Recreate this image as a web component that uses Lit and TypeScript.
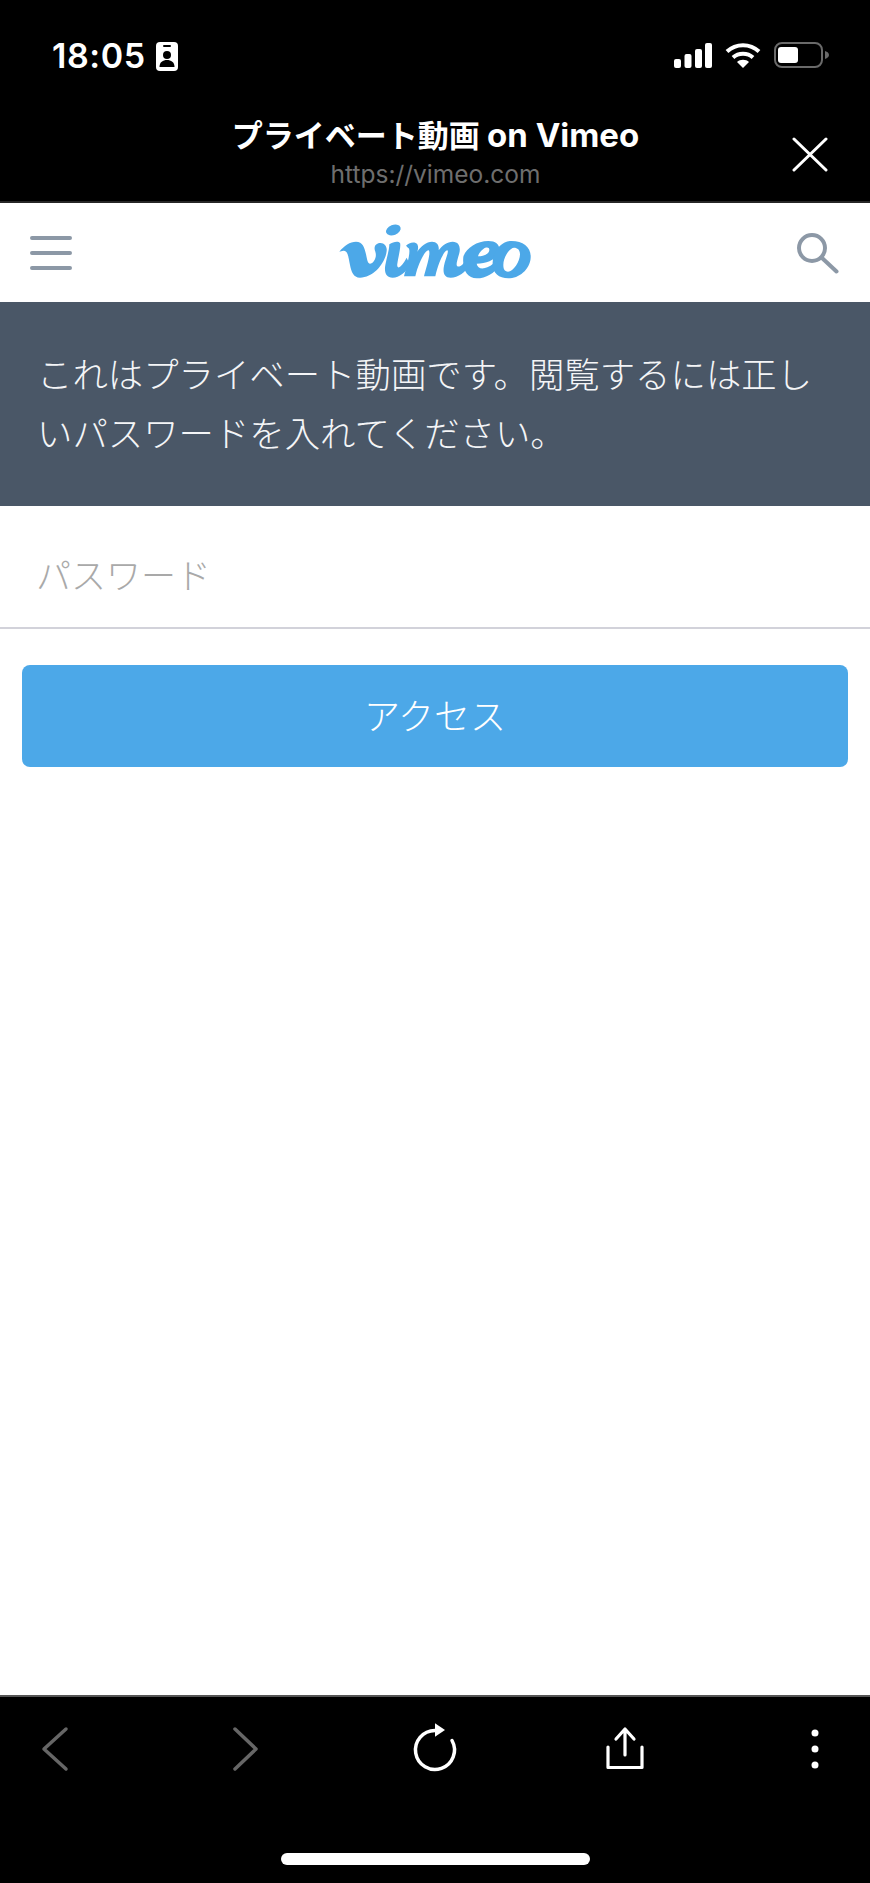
import { LitElement, html, css } from 'lit';
import { customElement } from 'lit/decorators.js';

@customElement('app-root')
export class AppRoot extends LitElement {
  static styles = css`
    :host {
      display: block;
      width: 870px;
      height: 1883px;
      overflow: hidden;
      background: #fff;
    }
    .page {
      display: flex;
      flex-direction: column;
      height: 1883px;
      font-family: Inter, "Noto Sans CJK JP", sans-serif;
    }
    .top {
      background: #000;
      color: #fff;
      height: 201px;
      border-bottom: 2px solid #262626;
      display: flex;
      flex-direction: column;
    }
    .status {
      height: 88px;
      padding: 24px 41px 0 52px;
      display: flex;
      align-items: center;
      justify-content: space-between;
      box-sizing: border-box;
    }
    .left,
    .right {
      display: flex;
      align-items: center;
    }
    .left {
      gap: 10px;
    }
    .right {
      gap: 13px;
      margin-top: -2px;
    }
    .time {
      font-size: 34px;
      font-weight: 600;
      letter-spacing: 0.6px;
      line-height: 40px;
    }
    .titlebar {
      flex: 1;
      display: grid;
      grid-template-columns: 1fr auto 1fr;
      align-items: center;
      padding: 0 42px 0 43px;
    }
    .titles {
      text-align: center;
      margin-top: 12px;
    }
    .title {
      font-size: 31px;
      font-weight: 700;
      line-height: 46px;
      white-space: nowrap;
    }
    .latin {
      font-size: 33px;
    }
    .url {
      font-size: 24.500px;
      line-height: 30px;
      color: #6e6e6e;
    }
    .close {
      justify-self: end;
      margin-top: 20px;
    }
    .nav {
      height: 99px;
      padding: 0 31px 0 30px;
      display: flex;
      align-items: center;
      justify-content: space-between;
      background: #fff;
    }
    .logo {
      margin-bottom: 6px;
    }
    .banner {
      background: #4a5767;
      color: #f4f5f7;
      font-family: "Noto Sans CJK JP", sans-serif;
      font-weight: 300;
      font-size: 35.400px;
      line-height: 59px;
      padding: 41px 50px 0 37px;
      height: 204px;
      box-sizing: border-box;
    }
    .field {
      height: 121px;
      border-bottom: 2px solid #d2d2da;
      display: flex;
      align-items: center;
    }
    .field input {
      width: 100%;
      border: 0;
      outline: 0;
      background: transparent;
      padding: 14px 0 0 36px;
      font-family: "Noto Sans CJK JP", sans-serif;
      font-weight: 300;
      font-size: 35px;
    }
    .field input::placeholder {
      color: #a9a9a9;
      opacity: 1;
    }
    .form {
      padding: 36px 22px 0;
    }
    .access {
      display: block;
      width: 100%;
      height: 102px;
      border: 0;
      border-radius: 8px;
      background: #4ca8e8;
      color: #fff;
      font-family: "Noto Sans CJK JP", sans-serif;
      font-weight: 300;
      font-size: 36px;
      padding: 0 0 4px;
    }
    .spacer {
      flex: 1;
    }
    .bottom {
      background: #000;
      height: 186px;
      border-top: 2px solid #555;
      display: flex;
      flex-direction: column;
      align-items: center;
    }
    .tools {
      width: 100%;
      box-sizing: border-box;
      padding: 29px 36px 0;
      display: flex;
      justify-content: space-between;
      height: 156px;
    }
    .reload {
      margin-top: -5px;
      overflow: visible;
    }
    .home {
      width: 309px;
      height: 12px;
      border-radius: 6px;
      background: #fff;
    }
    svg {
      display: block;
      flex: none;
    }
  `;

  render() {
    return html`
      <div class="page">
        <div class="top">
          <div class="status">
            <div class="left">
              <span class="time">18:05</span>
              <svg width="22" height="29" viewBox="0 0 22 29">
                <rect width="22" height="29" rx="4" fill="#fff" />
                <rect x="7" y="3" width="8" height="2" rx="1" fill="#000" />
                <circle cx="11" cy="13" r="4" fill="#000" />
                <path d="M3.500 25c0-5 3.500-7 7.500-7s7.500 2 7.500 7z" fill="#000" />
              </svg>
            </div>
            <div class="right">
              <svg width="38" height="25" viewBox="0 0 38 25" fill="#fff">
                <rect x="0" y="16" width="7" height="9" rx="2" />
                <rect x="10.500" y="11" width="7" height="14" rx="2" />
                <rect x="21" y="6" width="7" height="19" rx="2" />
                <rect x="31" y="0" width="7" height="25" rx="2" />
              </svg>
              <svg width="36" height="26" viewBox="0 0 36 26" fill="none" stroke="#fff" stroke-width="4">
                <path d="M2 9.500C11 1 25 1 34 9.500" />
                <path d="M8 15.500C13.500 10.500 22.500 10.500 28 15.500" />
                <path d="M18 26l-6-6c3-3 9-3 12 0z" fill="#fff" stroke="none" />
              </svg>
              <svg width="55" height="26" viewBox="0 0 55 26">
                <rect x="1" y="1" width="47" height="24" rx="7" fill="none" stroke="#6a6a6a" stroke-width="2" />
                <rect x="4" y="5" width="20" height="16" rx="3" fill="#fff" />
                <path d="M51 9c2.500 .8 4 2.200 4 4s-1.500 3.200-4 4z" fill="#6a6a6a" />
              </svg>
            </div>
          </div>
          <div class="titlebar">
            <span></span>
            <div class="titles">
              <div class="title">プライベート動画 <span class="latin">on Vimeo</span></div>
              <div class="url">https://vimeo.com</div>
            </div>
            <svg class="close" width="36" height="35" viewBox="0 0 36 35" stroke="#fff" stroke-width="3" stroke-linecap="round">
              <path d="M2 2l32 31M34 2L2 33" />
            </svg>
          </div>
        </div>

        <div class="nav">
          <svg width="42" height="34" viewBox="0 0 42 34" stroke="#8c98a6" stroke-width="4" stroke-linecap="round">
            <path d="M2 2h38M2 17h38M2 32h38" />
          </svg>
          <svg class="logo" width="210" height="70" viewBox="0 0 630 210" fill="#4ca8e8" fill-rule="evenodd">
            <ellipse cx="190" cy="45" rx="23" ry="15" transform="rotate(-22 190 45)" />
            <path d="M28 110C42 92 60 80 78 80C98 80 104 98 108 118C112 138 114 146 120 146C130 146 142 128 136 110C132 100 132 90 145 85C160 80 172 92 170 108C166 145 130 188 90 188C70 188 64 170 60 150C56 130 54 110 44 108C38 106 32 110 28 110Z" />
            <path d="M178 88C190 80 205 78 210 84C214 92 204 130 202 146C200 158 206 160 212 154C220 146 226 136 230 128L240 150C228 172 208 188 188 188C168 188 162 172 166 150C170 128 178 104 178 88Z" />
            <path d="M228 92C236 82 256 78 262 88C266 96 264 104 262 110C272 94 290 80 306 80C322 80 328 92 326 106C336 92 352 80 368 80C388 80 392 98 388 114C384 130 376 150 382 154C390 158 402 146 412 128L420 146C408 172 384 188 362 188C342 188 338 172 342 152C346 132 358 108 352 106C344 104 326 140 316 184L282 184C288 160 304 112 296 106C288 102 266 140 256 184L222 184C228 160 244 108 236 100C232 96 228 92 228 92Z" />
            <path d="M400 125C408 100 440 78 475 78C498 78 510 90 508 106C504 132 472 146 440 146C442 156 450 162 462 160C476 158 488 148 498 138L508 152C494 174 468 190 440 190C412 190 396 165 400 125ZM444 124C462 124 478 116 478 104C478 96 468 96 460 102C452 108 446 116 444 124Z" />
            <path d="M545 78C580 78 604 98 602 128C600 164 566 190 535 190C505 190 486 172 488 142C490 106 515 78 545 78ZM552 98C540 98 520 125 520 150C520 165 526 170 534 170C550 170 570 140 570 118C570 104 562 98 552 98Z" />
          </svg>
          <svg width="42" height="44" viewBox="0 0 42 44" fill="none" stroke="#8c98a6" stroke-width="4" stroke-linecap="round">
            <circle cx="15" cy="17" r="13" />
            <path d="M24.500 26.500L39.500 40.500" />
          </svg>
        </div>

        <div class="banner">これはプライベート動画です。閲覧するには正しいパスワードを入れてください。</div>

        <div class="field"><input type="password" placeholder="パスワード" /></div>

        <div class="form"><button class="access">アクセス</button></div>

        <div class="spacer"></div>

        <div class="bottom">
          <div class="tools">
            <svg width="38" height="46" viewBox="0 0 38 46" fill="none" stroke="#666" stroke-width="3.500" stroke-linecap="round" stroke-linejoin="round">
              <path d="M30 3L8 23l22 20" />
            </svg>
            <svg width="38" height="46" viewBox="0 0 38 46" fill="none" stroke="#666" stroke-width="3.500" stroke-linecap="round" stroke-linejoin="round">
              <path d="M9 3l21 20L9 43" />
            </svg>
            <svg class="reload" width="38" height="50" viewBox="4 0 38 50" fill="none" stroke="#fff" stroke-width="3.500" stroke-linecap="round">
              <path d="M40 19.500A19.500 19.500 0 1 1 23 9.500" />
              <path d="M23 2.300l10 6.700-10 6.700z" fill="#fff" stroke="none" />
            </svg>
            <svg width="38" height="46" viewBox="0 0 38 46" fill="none" stroke="#fff" stroke-width="3.200" stroke-linecap="round" stroke-linejoin="round">
              <path d="M2 21v20.500h34V21" />
              <path d="M19 29V4M10 13l9-10 9 10" />
            </svg>
            <svg width="38" height="46" viewBox="0 0 38 46" fill="#fff">
              <circle cx="19" cy="7" r="3.500" />
              <circle cx="19" cy="23" r="3.500" />
              <circle cx="19" cy="39" r="3.500" />
            </svg>
          </div>
          <div class="home"></div>
        </div>
      </div>
    `;
  }
}
